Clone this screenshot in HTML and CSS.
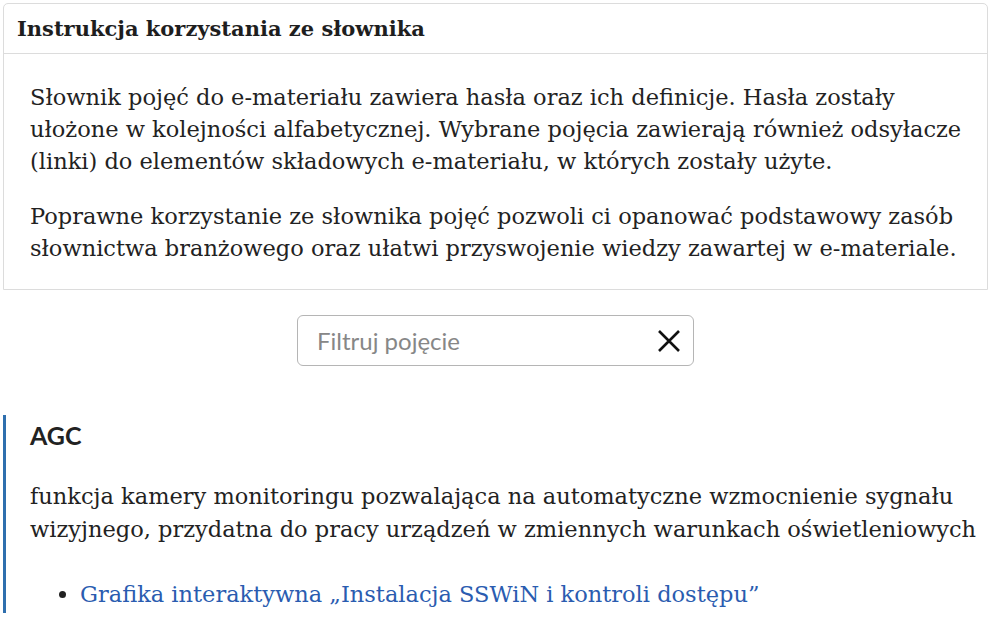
FILE: index.html
```html
<!DOCTYPE html>
<html lang="pl">
<head>
<meta charset="utf-8">
<title>Słownik pojęć</title>
<link rel="stylesheet" href="styles.css">
</head>
<body>
<section class="card">
  <header class="card-header">Instrukcja korzystania ze słownika</header>
  <div class="card-body">
    <p>Słownik pojęć do e-materiału zawiera hasła oraz ich definicje. Hasła zostały ułożone w kolejności alfabetycznej. Wybrane pojęcia zawierają również odsyłacze (linki) do elementów składowych e-materiału, w których zostały użyte.</p>
    <p>Poprawne korzystanie ze słownika pojęć pozwoli ci opanować podstawowy zasób słownictwa branżowego oraz ułatwi przyswojenie wiedzy zawartej w e-materiale.</p>
  </div>
</section>

<div class="filter-row">
  <label class="filter">
    <input class="filter-input" type="text" placeholder="Filtruj pojęcie">
    <svg class="filter-clear" width="24" height="24" viewBox="0 0 24 24" aria-hidden="true">
      <path d="M2 2 L22 22 M22 2 L2 22" stroke="#111" stroke-width="2.6" fill="none"/>
    </svg>
  </label>
</div>

<article class="entry">
  <h3 class="entry-term">AGC</h3>
  <p class="entry-def">funkcja kamery monitoringu pozwalająca na automatyczne wzmocnienie sygnału wizyjnego, przydatna do pracy urządzeń w zmiennych warunkach oświetleniowych</p>
  <ul class="entry-links">
    <li><a href="#">Grafika interaktywna „Instalacja SSWiN i kontroli dostępu”</a></li>
  </ul>
</article>
</body>
</html>
```
FILE: styles.css
```css
html, body {
  margin: 0;
  padding: 0;
  background: #fff;
}
body {
  padding: 3px 3px 0 3px;
  font-family: "DejaVu Serif", "Liberation Serif", serif;
  color: #222;
}
.card {
  border: 1px solid #dcdcdc;
  border-radius: 5px 5px 0 0;
}
.card-header {
  font-weight: bold;
  font-size: 21px;
  line-height: 24px;
  padding: 13px 13px 12px 13px;
  border-bottom: 1px solid #dcdcdc;
  color: #1e1e1e;
}
.card-body {
  padding: 27px 16px 25px 26px;
}
.card-body p {
  margin: 0 0 23px 0;
  font-size: 22.5px;
  line-height: 32px;
}
.card-body p:last-child {
  margin-bottom: 0;
}
.filter-row {
  display: flex;
  justify-content: center;
  padding-top: 25px;
}
.filter {
  display: flex;
  align-items: center;
  width: 397px;
  height: 51px;
  box-sizing: border-box;
  border: 1px solid #b5b5b5;
  border-radius: 6px;
  padding: 0 12px 0 19px;
}
.filter-input {
  flex: 1;
  min-width: 0;
  border: 0;
  outline: none;
  font-family: "Lato", sans-serif;
  font-size: 24px;
  color: #222;
  padding: 0;
  background: transparent;
}
.filter-input::placeholder {
  color: #878787;
}
.filter-clear {
  width: 24px;
  height: 24px;
}
.entry {
  margin-top: 49px;
  border-left: 3px solid #2f6fae;
  padding: 5px 0 2px 24px;
}
.entry-term {
  font-family: "Lato", sans-serif;
  font-weight: bold;
  font-size: 25px;
  line-height: 30px;
  margin: 0 0 30px 0;
  color: #222;
}
.entry-def {
  font-size: 22.5px;
  line-height: 33px;
  margin: 0 0 32px 0;
}
.entry-links {
  margin: 0;
  padding: 0 0 0 50px;
  font-size: 22.5px;
  line-height: 33px;
}
.entry-links a {
  color: #2a5cb0;
  text-decoration: none;
}
```
